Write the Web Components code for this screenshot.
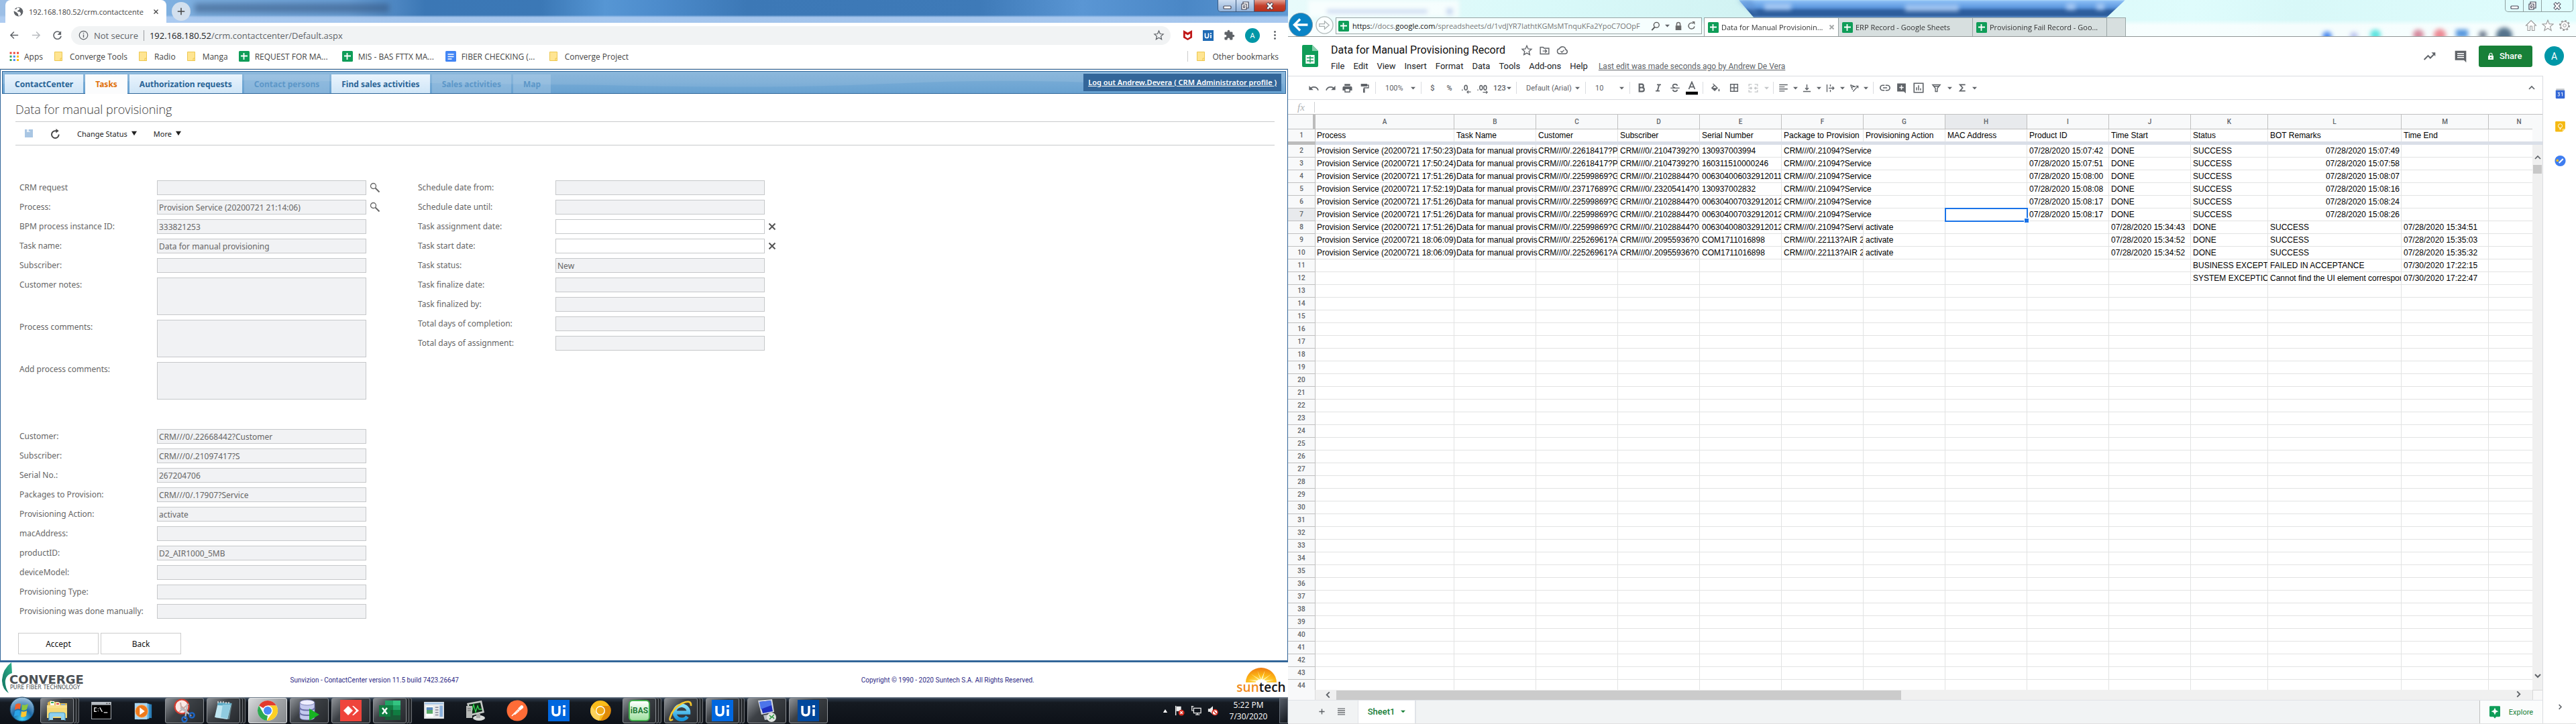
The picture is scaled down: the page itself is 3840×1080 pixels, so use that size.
<!DOCTYPE html>
<html lang="en">
<head>
<meta charset="utf-8">
<title>Data for manual provisioning</title>
<style>
html,body{margin:0;height:100%}
body{display:flex;height:100vh;overflow:hidden;background:#fff;font-family:"Open Sans","Noto Sans",sans-serif;font-size:12px;color:#333}
crm-desktop,sheets-desktop{flex:1 1 0;min-width:0}
</style>
</head>
<body>
<crm-desktop></crm-desktop>
<sheets-desktop></sheets-desktop>
<script>
const G='#5f6368';
const ui=(bg)=>`<rect width="32" height="32" fill="${bg}"/><g fill="none" stroke="#fff" stroke-width="3.4"><path d="M7 9v9q0 5 5 5t5-5V9M24 14v10"/></g><rect x="22" y="8" width="4" height="3.4" fill="#fff"/>`;
const st=(d,w=2,c=G)=>`<path d="${d}" fill="none" stroke="${c}" stroke-width="${w}"/>`;
const fl=(d,c=G)=>`<path d="${d}" fill="${c}"/>`;
/* name: [viewBox, markup] */
const ICONS={
 globe:['0 0 24 24',`<circle cx="12" cy="12" r="11" fill="#5f6368"/>`+fl('M9 2l6 1-1 4-4 2 0 3 5 0 3 4-2 5-4 1-1-5-4-4-6-3 1-4 5 0z','#fff')],
 back:['0 0 24 24',st('M21 12H4M11 4l-8 8 8 8',2.4)],
 fwd:['0 0 24 24',st('M3 12h17M13 4l8 8-8 8',2.4,'#b8bbbf')],
 reload:['0 0 24 24',st('M19.500 7A9 9 0 1 0 21 14',2.6)+fl('M21 2v9h-9z')],
 info:['0 0 24 24',`<circle cx="12" cy="12" r="10" fill="none" stroke="#5f6368" stroke-width="2"/>`+st('M12 10.500v7M12 6v2.500',2.2)],
 close:['0 0 24 24',st('M4 4l16 16M20 4L4 20',3.4,'#444')],
 closegrey:['0 0 24 24',st('M4 4l16 16M20 4L4 20',5,'#a5a8a8')],
 formx:['0 0 24 24',st('M3 3l18 18M21 3L3 21',4.2,'#555')],
 plus:['0 0 24 24',st('M12 3v18M3 12h18',2.6,'#444')],
 apps:['0 0 24 24',['#ea4335','#ea4335','#ea4335','#34a853','#4285f4','#fbbc04','#34a853','#4285f4','#fbbc04'].map((c,i)=>`<rect x="${1+(i%3)*9}" y="${1+(i/3|0)*9}" width="5" height="5" fill="${c}"/>`).join('')],
 folder:['0 0 16 16',`<path d="M1.500 1.500h11v13h-11z" fill="#ffe592" stroke="#edc74f"/><path d="M12.500 11v3.500h-2.500V11z" fill="#ffe592" stroke="#edc74f"/>`],
 sheet:['0 0 16 16',`<rect width="16" height="16" rx="1.500" fill="#0f9d58"/>`+st('M3 7.500h10M7.500 3v10',1.8,'#fff')],
 doc:['0 0 16 16',`<rect width="16" height="16" rx="1.500" fill="#4285f4"/>`+st('M3.500 5h9M3.500 8.500h9M3.500 12h6',1.6,'#fff')],
 star:['0 0 24 24',`<path d="M12 3l2.700 6.200 6.600.6-5 4.500 1.500 6.600L12 17.400 6.200 20.900l1.500-6.600-5-4.500 6.600-.6z" fill="none" stroke="#5f6368" stroke-width="1.800"/>`],
 mcafee:['0 0 16 16',fl('M1 0l7 4 7-4v12l-7 4-7-4z','#c01818')+fl('M4 5.500l4 2.500 4-2.500v5l-4 2.500-4-2.500z','#fff')],
 uismall:['0 0 32 32',ui('#1f6bb5')],
 puzzle:['0 0 24 24',fl('M20.500 11H19V7c0-1.100-.9-2-2-2h-4V3.500a2.500 2.500 0 0 0-5 0V5H4c-1.100 0-2 .9-2 2v3.800h1.500a2.700 2.700 0 0 1 0 5.400H2V20c0 1.100.9 2 2 2h3.800v-1.500a2.700 2.700 0 0 1 5.400 0V22H17c1.100 0 2-.9 2-2v-4h1.500a2.500 2.500 0 0 0 0-5z')],
 dots:['0 0 24 24',`<g fill="#5f6368"><circle cx="12" cy="4" r="2.300"/><circle cx="12" cy="12" r="2.300"/><circle cx="12" cy="20" r="2.300"/></g>`],
 save:['0 0 14 14',fl('M1 1h12v12H1z','#a9c6e3')+fl('M4 1h5v4H4z','#e8f0f8')+fl('M7 1h2v3H7z','#a9c6e3')],
 refresh:['0 0 16 16',st('M13.500 9A5.700 5.700 0 1 1 8 3.500h2',2,'#444')+fl('M9 0l4.500 3.500L9 7z','#444')],
 lens:['0 0 16 16',`<circle cx="5.500" cy="5.500" r="4" fill="none" stroke="#666" stroke-width="1.300"/>`+st('M8.500 8.500l6 6',2,'#666')],
 tri:['0 0 10 10',fl('M0 2.500h10L5 8z')],
 tridark:['0 0 10 10',fl('M0 1h10L5 9z','#222')],
 trigreen:['0 0 10 10',fl('M0 2.500h10L5 7.500z','#188038')],
 trilight:['0 0 10 10',fl('M0 2.500h10L5 8z','#c4c6c8')],
 min:['0 0 24 18',`<rect x="7" y="9" width="11" height="4" rx="1" fill="#fff" stroke="#445" stroke-width="1.200"/>`],
 restore:['0 0 24 18',`<path d="M9 3h8v9h-8z" fill="#fff" stroke="#445" stroke-width="1.200"/><path d="M7 6h7v8H7z" fill="#fff" stroke="#445" stroke-width="1.200"/><path d="M9.500 8.500h2v3h-2z" fill="none" stroke="#445"/>`],
 winx:['0 0 24 18',st('M8 4.500l8 9M16 4.500l-8 9',4.6,'#445')+st('M8.500 5l7 8M15.500 5l-7 8',2.6,'#fff')],
 converge:['0 0 18 46',`<defs><linearGradient id="a" x1="1" y1="0" x2="0" y2="1"><stop offset="0" stop-color="#2fb28d"/><stop offset="1" stop-color="#11725f"/></linearGradient></defs>`+fl('M15 0Q2 10 1 26q0 14 10 20Q5 36 6 27q1-8 10-11z','url(#a)')],
 sun:['0 0 52 24',`<defs><radialGradient id="s" cx=".5" cy="1" r="1"><stop offset="0" stop-color="#fff27a"/><stop offset=".5" stop-color="#fdb515"/><stop offset="1" stop-color="#ee7a12"/></radialGradient></defs><path d="M1 24a25 24 0 0 1 50 0z" fill="url(#s)"/>`+fl('M26 24L5 20l19 1L9 10l16 10L20 5l6 14 6-14-4 15L43 10 29 21l18-1z','#fffbd0')+`<ellipse cx="26" cy="24" rx="9" ry="5" fill="#fff"/>`],
 start:['0 0 40 40',`<defs><radialGradient id="o" cx=".5" cy=".9" r=".9"><stop offset="0" stop-color="#3fd0f5"/><stop offset=".45" stop-color="#1c6aa8"/><stop offset="1" stop-color="#a9c6dc"/></radialGradient></defs><circle cx="20" cy="20" r="18" fill="url(#o)" stroke="#0b3a5e"/><path d="M10 13q4-3 8-1l-1 8q-4-2-8 1z" fill="#f2602a"/><path d="M20 13q4 2 9-1l-2 8q-4 3-8 1z" fill="#8cc63f"/><path d="M9 23q4-3 8-1l-1 8q-4-2-8 1z" fill="#2aa5e8"/><path d="M19 23q4 2 8-1l-1 8q-4 3-8 1z" fill="#fdc72e"/>`],
 explorer:['0 0 36 36',fl('M4 6l5-3 3 2h8l3 2h10v20H4z','#e0b94f')+fl('M8 4h6v6H8z','#fff')+fl('M16 6h6v6h-6z','#fff')+fl('M9 5h4v2H9z','#34a853')+fl('M17 7h4v2h-4z','#e04030')+fl('M24 8h6v4h-6z','#8ac')+fl('M3 10h30v19H3z','#f8e08c')+fl('M3 14h30v15H3z','#f5d976')+fl('M6 32v-8q0-3 3-3h18q3 0 3 3v8h-6v-5H12v5z','#8ed0f0')+st('M6 33v-9q0-3 3-3h18q3 0 3 3v9',1.2,'#4a9cc8')],
 cmd:['0 0 32 28',fl('M0 0h32v28H0z','#b8bec4')+fl('M1 5h30v22H1z','#000')+`<circle cx="29" cy="2.500" r="1" fill="#444"/><circle cx="25" cy="2.500" r="1" fill="#444"/>`+st('M8.500 9.500H5v6h3.500M11 10.500v1M11 14v1M13.500 9l4 7M20 17h6',1.4,'#eee')],
 media:['0 0 32 32',fl('M14 4l16 2v22l-16-2z','#2c7fb8')+fl('M8 4l18 1v24L8 30z','#59aee0')+fl('M3 4h20v26H3z','#a8d6f2')+`<circle cx="14" cy="17" r="10" fill="#ee7a1c"/><circle cx="14" cy="17" r="10" fill="none" stroke="#f8b878"/>`+fl('M11 11l8 6-8 6z','#fff')],
 snip:['0 0 36 36',`<circle cx="14" cy="12" r="10.500" fill="#fbe9e6" stroke="#d43b2f" stroke-width="2.200"/>`+st('M14 12l14 14M10 20L24 8M12 6l2 12',2,'#c9a9a4')+st('M12 14l13 9M22 8l-3 22',2.2,'#b7bcc4')+`<circle cx="29" cy="25" r="3.600" fill="none" stroke="#1c66c9" stroke-width="2.400"/><circle cx="18" cy="31" r="3.600" fill="none" stroke="#1c66c9" stroke-width="2.400"/>`],
 notepad:['0 0 34 34',fl('M10 4l20 2-4 24-20-2z','#5f7f88')+fl('M9 5l20 1-6 24L4 27z','#bfe6f2')+fl('M9 5l20 1-1 4L8 9z','#5aa8c4')+fl('M16 8h12l-5 21-10-2z','#8fcbe0')+st('M9 3v3M13 3v3M17 3v3M21 4v3M25 4v3',1.4,'#ddd')],
 chrome:['0 0 34 34',`<circle cx="17" cy="17" r="15" fill="#fff"/>`+fl('M17 17L4 9.500A15 15 0 0 1 30 9.500H17z','#e33b2e')+fl('M4 9.500L10.500 20.700 17 24.500 15.700 32A15 15 0 0 1 4 9.500z','#2da94f')+fl('M30 9.500A15 15 0 0 1 15.700 32L23.500 20.700 23.500 13 17 9.500z','#fdd023')+`<circle cx="17" cy="17" r="7.500" fill="#fff"/><circle cx="17" cy="17" r="6" fill="#4a8af4"/>`],
 db:['0 0 34 34',`<g fill="#c4c9ee" stroke="#6a6ea8" stroke-width=".8"><path d="M3 5v22q0 4 11 4t11-4V5z"/><path d="M3 20q0 4 11 4t11-4M3 12.500q0 4 11 4t11-4" fill="none" stroke-width="2"/><ellipse cx="14" cy="5" rx="11" ry="4" fill="#eef"/></g>`+fl('M17 14l15 9-15 9z','#18b522')],
 anydesk:['0 0 32 32',fl('M0 0h32v32H0z','#ef443b')+fl('M12 9l7 7-7 7-7-7z','#fff')+fl('M18 9l2 0 8 7-8 7-2 0 6-7z','#fff')],
 excel:['0 0 34 34',fl('M10 2h23v29H10z','#21a366')+fl('M10 9h12v8H10z','#107c41')+fl('M22 2h11v7H22z','#33c481')+fl('M10 16h23v15H10z','#185c37')+fl('M22 16h11v8H22z','#107c41')+fl('M1 9h17v17H1z','#107c41')+st('M6 13l7 9M13 13l-7 9',2.4,'#fff')],
 win:['0 0 32 28',fl('M0 0h32v27H0z','#e8eaec')+fl('M1 1h30v3H1z','#a9c8e8')+fl('M3 7h12v17H3z','#fff')+fl('M4 9h10v10H4z','#58a868')+fl('M4 9h10v4H4z','#5a86c4')+st('M18 9h5M18 13h5M18 17h5M18 21h5',1.6,'#889')+fl('M25 6h5v18h-5z','#8ab0dc')],
 monitor:['0 0 34 34',fl('M4 6l22-4 4 18-21 5z','#c8cac8')+fl('M7 8l17-3 3 13-17 4z','#0f2c18')+st('M8 16h4l2-8 3 11 3-9 2 5h4',1.3,'#33d650')+fl('M3 10h9v18H3z','#b7b9b7')+st('M5 14h5M5 17h5',1,'#666')+`<ellipse cx="22" cy="28" rx="9" ry="4" fill="#d7d9d7"/>`+fl('M18 22h6v6h-6z','#aaa')],
 postman:['0 0 32 32',`<circle cx="16" cy="16" r="15.500" fill="#ff6c37"/>`+st('M8 24l9-9 2 1M12 22l7-6',1.6,'#fff')+fl('M17 13l5-5q4 0 3 4l-5 4z','#fff')],
 ui1:['0 0 32 32',ui('#0067df')],
 ui2:['0 0 32 32',ui('#00479c')],
 canary:['0 0 34 34',`<circle cx="17" cy="17" r="15" fill="#fbbc1a"/>`+fl('M17 10h14a15 15 0 0 1-14 22l7-12z','#e08a08')+fl('M4 10l7 10 6 4-2 8A15 15 0 0 1 4 10z','#fdd25a')+`<circle cx="17" cy="17" r="7" fill="#fff"/><circle cx="17" cy="17" r="5.600" fill="#f0a818"/>`],
 ie:['0 0 36 36',`<defs><linearGradient id="e" x1="0" y1="0" x2="0" y2="1"><stop offset="0" stop-color="#8be2fb"/><stop offset="1" stop-color="#1693d8"/></linearGradient></defs><path d="M27.500 27A10.500 10.500 0 1 1 29.500 21H11" fill="none" stroke="url(#e)" stroke-width="5.500"/><path d="M6 31q-6 4-4-3Q6 14 20 7q14-6 13 4" fill="none" stroke="#f6c62b" stroke-width="2.600"/>`],
 rdp:['0 0 36 36',fl('M5 3l21-2 3 19-19 4z','#d5dbe4')+fl('M7 5l17-2 3 16-15 3z','#1e2fc0')+fl('M7 5l17-2 1 7-16 6z','#4c74ea')+fl('M13 25l12-2 4 7-14 2z','#b9bec6')+`<circle cx="25" cy="28" r="7" fill="#dfe3e0"/>`+st('M22 25l3 3-3 3M29 24l-3 3 3 3',1.5,'#2a9a3e')],
 trayup:['0 0 10 8',fl('M0 8h10L5 0z','#fff')],
 flag:['0 0 18 18',st('M3 1v16',1.6,'#eee')+fl('M4 2h8v8H4z','#eee')+`<circle cx="12.500" cy="12.500" r="5" fill="#d42a1e"/>`+st('M10.500 10.500l4 4M14.500 10.500l-4 4',1.5,'#fff')],
 net:['0 0 18 18',st('M5 5h12v8H5zM8 16h7M11 13v3M2 1v8h3M1 2h4',1.4,'#eee')],
 sound:['0 0 18 18',fl('M1 6h3l5-4.500v14L4 11H1z','#eee')+`<circle cx="12.500" cy="12" r="4.500" fill="#fff" stroke="#d42a1e" stroke-width="1.800"/>`+st('M9.500 9l6 6',1.6,'#d42a1e')],
 ieback:['0 0 40 40',`<circle cx="20" cy="20" r="18.500" fill="#0a84c6" stroke="#7d97a5"/>`+st('M31 20H11M19 11l-9 9 9 9',3.6,'#fff')],
 iefwd:['0 0 30 30',`<circle cx="15" cy="15" r="13" fill="#fbffff" stroke="#b3bcbc" stroke-width="1.400"/>`+st('M7 13h8V9l7 6-7 6v-4H7z',1.3,'#a9b0b0')],
 search:['0 0 16 16',`<circle cx="9.500" cy="6" r="4.500" fill="none" stroke="#555" stroke-width="1.500"/>`+st('M6.500 9.500L1.500 15',2.2,'#555')],
 lock:['0 0 14 16',fl('M2 7h10v8H2z','#6a6a6a')+st('M4 7V4.500a3 3 0 0 1 6 0V7',1.8,'#6a6a6a')],
 iereload:['0 0 16 16',st('M13.500 9A5.500 5.500 0 1 1 11 3.500',1.8,'#666')+fl('M9 0h5v6z','#666')],
 home:['0 0 18 18',`<path d="M1.500 9L9 1.500 16.500 9H14v7.500h-3.500V10h-3v6.500H4V9z" fill="#fff" stroke="#9a9a9a" stroke-width="1.100"/>`],
 iestar:['0 0 18 18',`<path d="M9 1l2.200 5.600 6 .3-4.700 3.700 1.700 6L9 13.200l-5.200 3.400 1.700-6L.8 6.900l6-.3z" fill="#fff" stroke="#9a9a9a" stroke-width="1.100"/>`],
 gear:['0 0 18 18',`<circle cx="9" cy="9" r="6.600" fill="#fff" stroke="#9a9a9a" stroke-width="3" stroke-dasharray="2.600 2.580"/><circle cx="9" cy="9" r="5.800" fill="#fff" stroke="#9a9a9a"/><circle cx="9" cy="9" r="2.300" fill="#fff" stroke="#9a9a9a"/>`],
 sheetslogo:['0 0 24 33',fl('M2 0h13l9 9v22q0 2-2 2H2q-2 0-2-2V2q0-2 2-2z','#0f9d58')+fl('M15 0l9 9h-9z','#87ceac')+fl('M5.500 15h13v13h-13z','#fff')+st('M7 19.200h10M7 23.700h10M12 16v11',1.4,'#0f9d58')+st('M6.300 15.800h11.400v11.400H6.300z',1.2,'#fff')],
 move:['0 0 24 24',st('M3 5h6l2 2h10v12H3z',2)+st('M8 13h8M13 9.500l3.500 3.500-3.500 3.500',1.8)],
 cloud:['0 0 24 24',st('M7 19a5 5 0 0 1-1-9.900 6.500 6.500 0 0 1 12.500 1.500A4.300 4.300 0 0 1 18 19z',2)+st('M8.500 13.500l2.500 2.500 4.500-4.500',1.8)],
 trend:['0 0 24 24',st('M2 18l7-7 4 4 8-8',2.4)+fl('M15 5h7v7z')],
 comment:['0 0 24 24',fl('M2 2h20v21l-4-4H2z')+st('M6 7h12M6 10.500h12M6 14h12',1.8,'#fff')],
 sharelock:['0 0 24 24',fl('M4 10h16v12H4z','#fff')+st('M8 10V6.500a4 4 0 0 1 8 0V10',2.4,'#fff')+`<circle cx="12" cy="16" r="2" fill="#188038"/>`],
 undo:['0 0 24 24',fl('M2 7v9h9l-3.600-3.600a8 8 0 0 1 12.600 4.600l2.300-.8A10.500 10.500 0 0 0 5.600 10.600z')],
 redo:['0 0 24 24',fl('M22 7v9h-9l3.600-3.600A8 8 0 0 0 4 17l-2.300-.8a10.500 10.500 0 0 1 16.700-5.600z')],
 print:['0 0 24 24',fl('M6 3h12v4H6zM5 8h14q3 0 3 3v6h-4v4H6v-4H2v-6q0-3 3-3z')+fl('M8 14h8v5H8z','#fff')],
 paint:['0 0 24 24',fl('M4 3h14v6H4z')+st('M18 6h3v6H11v3',2)+fl('M9 14h4v9H9z')],
 dec0:['0 0 24 24',st('M3 16h2',2.4)+`<ellipse cx="11.500" cy="11" rx="3" ry="5" fill="none" stroke="#5f6368" stroke-width="2.200"/>`+st('M22 20h-8M17 17l-3 3 3 3',1.6)],
 dec00:['0 0 28 24',st('M2 16h2',2.4)+`<g fill="none" stroke="#5f6368" stroke-width="2.200"><ellipse cx="10" cy="11" rx="3" ry="5"/><ellipse cx="19" cy="11" rx="3" ry="5"/></g>`+st('M14 21h10M21 18l3 3-3 3',1.6)],
 bold:['0 0 24 24',`<path d="M7 4v16h6.500a4.300 4.300 0 0 0 0-8.600 3.800 3.800 0 0 0-.5-7.400zM7 11.500h6" fill="none" stroke="#5f6368" stroke-width="3.200"/>`],
 italic:['0 0 24 24',st('M9 5h9M6 19h9M14 5l-4 14',2.8)],
 strike:['0 0 24 24',st('M2 12.500h20',2)+st('M17 7.500Q16.500 4 12 4T7 7.500t5 4M7 16q.5 4 5 4t5-4',2.4)],
 textcol:['0 0 24 28',st('M6 16L12 2l6 14M8.500 11.500h7',2.4)+fl('M0 21h24v6H0z','#000')],
 fill:['0 0 24 24',fl('M7 2l10 9.500-7 7-7.500-7 6-6-3-2.500zM19 13q3 4 0 6-3-2 0-6z')+fl('M6 11.500l4-4 4 4z','#fff')],
 borders:['0 0 24 24',st('M4 4h16v16H4zM4 12h16M12 4v16',2.2)],
 merge:['0 0 24 24',st('M9 4H3v4M3 16v4h6M15 4h6v4M21 16v4h-6M2 12h7M22 12h-7M6.500 9.500L9 12l-2.500 2.500M17.500 9.500L15 12l2.500 2.500',1.9,'#c4c6c8')],
 align:['0 0 24 24',st('M2 4h20M2 9h13M2 14h20M2 19h13',2.3)],
 valign:['0 0 24 24',st('M3 20h18M12 3v12M8 11.500l4 4 4-4',2.3)],
 wrap:['0 0 24 24',st('M4 3v18M12 3v5M12 16v5M8 12h12M17 8.500l3.500 3.500-3.500 3.500',2.2)],
 rotate:['0 0 24 24',st('M4 4l5 12M4 4l12 5M7 11l4-4M10 20L22 7M22 12V7h-5',2)],
 link:['0 0 24 24',st('M11 17H7.500a5 5 0 0 1 0-10H11M13 7h3.500a5 5 0 0 1 0 10H13M8 12h8',2.2)],
 addcomment:['0 0 24 24',fl('M3 2h18v21l-4-4H3z')+st('M12 6v9M7.500 10.500h9',2.2,'#fff')],
 chart:['0 0 24 24',st('M3 3h18v18H3z',2.2)+st('M8 11v6M12 7v10M16 13v4',2)],
 filter:['0 0 24 24',st('M4 5h16l-6 7.500v6.500h-4v-6.500zM7 8h10',2)],
 sigma:['0 0 24 24',st('M19 5H7l6 7-6 7h12',2.6)],
 up:['0 0 24 24',st('M4 16l8-8 8 8',3.4)],
 down:['0 0 24 24',st('M4 8l8 8 8-8',4)],
 left:['0 0 24 24',st('M17 3l-9 9 9 9',4)],
 right:['0 0 24 24',st('M7 3l9 9-9 9',4)],
 cal:['0 0 24 26',fl('M2 2h20v6H2z','#c5c9cc')+fl('M1 6h22v18q0 2-2 2H3q-2 0-2-2z','#3367d6')+st('M6 12h4.500l-2.500 3q3 0 2.500 3t-4.500 1M14 13l3-1.500V20',1.5,'#fff')],
 keep:['0 0 24 26',fl('M2 0h20q2 0 2 2v16l-7 7H2q-2 0-2-2V2q0-2 2-2z','#f5b912')+fl('M24 18l-7 7v-7z','#fbdc7b')+`<circle cx="12" cy="11" r="5" fill="none" stroke="#fff" stroke-width="1.500"/>`+st('M10 17h4M10 19.500h4',1.5,'#fff')],
 tasks:['0 0 28 30',`<circle cx="14" cy="15" r="13.500" fill="#3f7df0"/><circle cx="7" cy="14" r="3" fill="#fbbc04"/>`+st('M11 20l10-10',3.6,'#fff')],
 addsheet:['0 0 20 20',st('M10 1v18M1 10h18',3,'#5b5f63')],
 list:['0 0 20 20',st('M0 2h20M0 7.300h20M0 12.600h20M0 18h20',2.6,'#6a6d70')],
 explore:['0 0 24 28',fl('M2 0h20q2 0 2 2v20q0 2-2 2h-7l-3 4-3-4H2q-2 0-2-2V2q0-2 2-2z','#0f9d58')+fl('M12 4l2.500 5.500L20 12l-5.500 2.500L12 20l-2.500-5.500L4 12l5.500-2.500z','#fff')]
};
class UiIcon extends HTMLElement{
 connectedCallback(){
  const [vb,m]=ICONS[this.getAttribute('name')];
  const w=this.getAttribute('w')||16,h=this.getAttribute('h')||w;
  this.attachShadow({mode:'open'}).innerHTML=`<style>:host{display:inline-flex;flex:none}svg{display:block}</style><svg width="${w}" height="${h}" viewBox="${vb}" aria-hidden="true">${m}</svg>`;
 }
}
customElements.define('ui-icon',UiIcon);

const def=(name,css,html)=>customElements.define(name,class extends HTMLElement{
 connectedCallback(){
  if(this.shadowRoot)return;
  this.attachShadow({mode:'open'}).innerHTML=`<style>*{box-sizing:border-box}button,input,textarea,select{font:inherit;color:inherit;margin:0}button{background:none;border:0;padding:0}${css}</style>${typeof html==='function'?html(this):html}`;
 }
});
const ic=(n,w=16,h=w)=>`<ui-icon name="${n}" w="${w}" h="${h}"></ui-icon>`;

/* ---------- left monitor ---------- */
def('crm-desktop',':host{display:flex;flex-direction:column;min-height:0;background:#fff}crm-page{flex:1;min-height:0}',
 '<chrome-tabs></chrome-tabs><chrome-toolbar></chrome-toolbar><bookmarks-bar></bookmarks-bar><crm-page></crm-page><crm-footer></crm-footer><win-taskbar></win-taskbar>');

def('window-buttons',`:host{display:flex;align-self:flex-start;height:18px;border:1px solid var(--line,#3b5a80);border-top:0;border-radius:0 0 5px 5px;overflow:hidden}
button{width:27px;height:17px;border-right:1px solid var(--line,#3b5a80);display:grid;place-items:center;background:var(--btn,linear-gradient(#cfdff2,#8fb0d8))}
button:last-child{width:46px;border:0;background:var(--close,linear-gradient(#e3a294,#c4402c 50%,#b5301c))}`,
 `<button aria-label="Minimize">${ic('min',24,18)}</button><button aria-label="Restore">${ic('restore',24,18)}</button><button aria-label="Close">${ic('winx',24,18)}</button>`);

def('chrome-tabs',`:host{display:flex;height:34px;position:relative;overflow:hidden;background:
 linear-gradient(transparent 66%,rgba(175,205,242,.9) 76%),
 linear-gradient(90deg,#9dbfe6 0,#7fb0e0 13%,#6a9fd6 27%,#3b77b5 33%,#3b78b6 42%,#5696d4 47%,#4d8ccc 51%,#3c78b6 58%,#3e7ab8 76%,#5a96d4 84%,#4a87c6 92%,#5f9ad4)}
.tab{display:flex;align-items:center;gap:8px;width:240px;margin-left:8px;height:34px;background:#fff;border-radius:8px 8px 0 0;padding:0 11px 0 12px;font-size:11px}
.tab span{flex:1;overflow:hidden;white-space:nowrap;color:#444}
.new{width:28px;height:28px;border-radius:50%;background:#d3e0ee;margin:3px 0 0 8px;display:grid;place-items:center}
.blur{flex:1;margin:5px 0 0 6px;filter:blur(4px)}
.blur i{display:block;width:290px;height:14px;background:rgba(45,75,115,.5)}
window-buttons{margin-right:3px}`,
 `<div class="tab">${ic('globe',15)}<span>192.168.180.52/crm.contactcente</span>${ic('close',9)}</div><button class="new" aria-label="New tab">${ic('plus',14)}</button><div class="blur"><i></i></div><window-buttons></window-buttons>`);

def('chrome-toolbar',`:host{display:flex;align-items:center;height:37px;padding:0 12px 0 14px;gap:18px}
.omni{flex:1;display:flex;align-items:center;height:28px;border-radius:14px;background:#f1f3f4;padding:0 9px 0 11px;gap:8px;font-size:13px;color:#5f6368;margin:0 0 0 -5px}
.sep{width:1px;height:16px;background:#9a9da1}
.nav{display:flex;gap:17px}
.url{flex:1;display:block}.url b{font-weight:400;color:#202124}
.ext{display:flex;gap:15px;align-items:center}
.av{width:22px;height:22px;border-radius:50%;background:#0097a7;color:#fff;display:grid;place-items:center;font-size:11px}`,
 `<div class="nav">${ic('back',15)}${ic('fwd',15)}${ic('reload',15)}</div><div class="omni">${ic('info',15)}<span>Not secure</span><span class="sep"></span><span class="url"><b>192.168.180.52</b>/crm.contactcenter/Default.aspx</span>${ic('star',17)}</div><div class="ext">${ic('mcafee',15)}${ic('uismall',16)}${ic('puzzle',17)}<span class="av">A</span>${ic('dots',15)}</div>`);

def('bookmarks-bar',`:host{display:flex;align-items:center;height:32px;padding:0 14px;gap:16px;border-bottom:1px solid #d4d6d9;color:#444}
a{display:flex;align-items:center;gap:8px;color:inherit;text-decoration:none;white-space:nowrap;padding-bottom:5px}
.long{width:138px}.other{margin-left:auto;border-left:1px solid #ccc;padding-left:12px;height:16px;padding-bottom:0;margin-bottom:5px}`,
 `<a href="#">${ic('apps',14)}Apps</a><a href="#">${ic('folder')}Converge Tools</a><a href="#">${ic('folder')}Radio</a><a href="#">${ic('folder')}Manga</a><a href="#" class="long">${ic('sheet')}REQUEST FOR MA...</a><a href="#" class="long">${ic('sheet')}MIS - BAS FTTX MA...</a><a href="#" class="long">${ic('doc')}FIBER CHECKING (...</a><a href="#">${ic('folder')}Converge Project</a><a href="#" class="other">${ic('folder')}Other bookmarks</a>`);

def('crm-nav',`:host{display:flex;flex:none;height:34px;border:1px solid #2f6699;position:relative;padding:4px 6px 0 3px;gap:3px;background:linear-gradient(#8cb8dc,#82b1d8 50%,#6fa6d3);box-sizing:border-box}
.wave{position:absolute;inset:0;width:100%;height:100%}
a{position:relative;height:28px;line-height:30px;padding:0 15px;font-weight:700;text-decoration:none;color:#2a6496;background:linear-gradient(#eaf4fd,#cfe5f7);white-space:nowrap}
a.on{background:#fbfcfd;color:#e0700a;height:29px}
a.off{background:rgba(190,215,238,.35);color:#5d97c8}
.out{margin:-1px 0 0 auto;height:26px;line-height:26px;background:#336699;color:#fff;text-decoration:underline;padding:0 7px;font-weight:600;font-size:11px}`,
 `<svg class="wave" viewBox="0 0 1914 32" preserveAspectRatio="none" aria-hidden="true"><path d="M0 18Q300 10 480 14T900 20q250 6 420-2t330-1 260 1v14H0z" fill="#5c9acd" opacity=".35"/></svg><a href="#">ContactCenter</a><a href="#" class="on">Tasks</a><a href="#">Authorization requests</a><a href="#" class="off">Contact persons</a><a href="#">Find sales activities</a><a href="#" class="off">Sales activities</a><a href="#" class="off">Map</a><a href="#" class="out">Log out Andrew.Devera ( CRM Administrator profile )</a>`);

def('crm-field',`:host{display:flex;align-items:flex-start;gap:5px;font:12px "Noto Sans",sans-serif;color:#666}
label{width:200px;line-height:22px;height:22px;white-space:nowrap}
input,textarea{width:312px;height:22px;border:1px solid #c6c8ca;background:#f1f2f4;padding:0 2px;resize:none;display:block;border-radius:0;outline:0}
textarea{height:56px}.open{background:#fff}
ui-icon{align-self:center}`,
 e=>{const o=e.dataset;return `<label for="f">${o.label}</label>${'area'in o?'<textarea id="f" readonly></textarea>':`<input id="f" ${'open'in o?'class="open"':'readonly'} value="${o.value||''}">`}${o.icon?ic(o.icon,o.icon==='formx'?12:16):''}`});

const f=(l,v='',x='')=>`<crm-field data-label="${l}" data-value="${v}" ${x}></crm-field>`;
def('crm-page',`:host{display:flex;flex-direction:column;border:1px solid #336699;border-bottom-width:3px;padding:2px 2px 0;font-family:"Noto Sans",sans-serif}
h1{flex:none;margin:0 17px 0 20px;height:42px;font:300 18px/46px "Open Sans",sans-serif;color:#3c3c3c;border-bottom:1px solid #c8cacc}
.bar{flex:none;margin:0 17px 0 20px;height:35px;border-bottom:1px solid #c8cacc;display:flex;align-items:center;gap:25px;padding-left:13px;font-size:11px;color:#222}
.bar button{display:flex;align-items:center;gap:6px}
.form{flex:none;display:grid;grid-template-columns:594px 594px;padding:52px 0 0 26px}
.col{display:flex;flex-direction:column;gap:7px}
.second{padding-top:44px}
.act{flex:none;display:flex;gap:3px;padding:21px 0 0 24px}
.act button{width:120px;height:32px;border:1px solid #ccc;background:#fff;color:#111;font:12px "Noto Sans",sans-serif}`,
 `<crm-nav></crm-nav><h1>Data for manual provisioning</h1><div class="bar"><button aria-label="Save">${ic('save',14)}</button><button aria-label="Refresh">${ic('refresh',15)}</button><button>Change Status ${ic('tridark',8)}</button><button>More ${ic('tridark',8)}</button></div>
<div class="form"><div class="col">${f('CRM request','','data-icon="lens"')+f('Process:','Provision Service (20200721 21:14:06)','data-icon="lens"')+f('BPM process instance ID:','333821253')+f('Task name:','Data for manual provisioning')+f('Subscriber:')+f('Customer notes:','','data-area')+f('Process comments:','','data-area')+f('Add process comments:','','data-area')}</div>
<div class="col">${f('Schedule date from:')+f('Schedule date until:')+f('Task assignment date:','','data-open data-icon="formx"')+f('Task start date:','','data-open data-icon="formx"')+f('Task status:','New')+f('Task finalize date:')+f('Task finalized by:')+f('Total days of completion:')+f('Total days of assignment:')}</div>
<div class="col second">${f('Customer:','CRM///0/.22668442?Customer')+f('Subscriber:','CRM///0/.21097417?S')+f('Serial No.:','267204706')+f('Packages to Provision:','CRM///0/.17907?Service')+f('Provisioning Action:','activate')+f('macAddress:')+f('productID:','D2_AIR1000_5MB')+f('deviceModel:')+f('Provisioning Type:')+f('Provisioning was done manually:')}</div></div>
<div class="act"><button>Accept</button><button>Back</button></div>`);

def('crm-footer',`:host{display:grid;grid-template-columns:131px 1fr 1fr 80px;height:52px;align-items:center;text-align:center;font:10px Roboto,sans-serif;color:#2e2a86}
.cv{display:flex;padding-left:2px;color:#4a4f53;text-align:left;height:46px;align-self:start}
.cv div{margin:18px 0 0 -6px;white-space:nowrap}.cv b{display:block;font:700 18px/16px "DejaVu Sans",sans-serif}.cv small{display:block;font:8px/8px "DejaVu Sans",sans-serif;padding-left:1px}
.sun{display:flex;flex-direction:column;align-items:center;font:600 19px/14px "Open Sans",sans-serif;color:#111}.sun i{font-style:normal;color:#f08a1a}`,
 `<div class="cv">${ic('converge',18,46)}<div><b>CONVERGE</b><small>PURE FIBER TECHNOLOGY</small></div></div><span>Sunvizion - ContactCenter version 11.5 build 7423.26647</span><span>Copyright © 1990 - 2020 Suntech S.A. All Rights Reserved.</span><div class="sun">${ic('sun',52,22)}<span><i>sun</i>tech</span></div>`);

def('task-button',`:host{display:block;width:62px;padding:1px 2px;height:40px;box-sizing:border-box}
.b{display:flex;height:38px;width:58px}
button{flex:1;display:grid;place-items:center;border:1px solid transparent;border-radius:3px}
:host([open]) button{border-color:#8b8f94;background:linear-gradient(135deg,#8d9196,#3d4146 40%,#26292d)}
:host([active]) button{border-color:#e4e6e8;background:linear-gradient(135deg,#d8dadc,#a3a6a9 50%,#84888c)}
i{display:none;width:4px;border:1px solid #6f7378;border-left:0;border-radius:0 3px 3px 0;background:#24272b}
:host([stack]) i{display:block}
b{font:700 12px Roboto,sans-serif;color:#1e7a35;background:linear-gradient(#fff,#9fe0a0);border:2px solid #3fae4a;border-radius:6px;width:32px;height:32px;display:grid;place-items:center}`,
 e=>{const n=e.getAttribute('icon');return `<div class="b"><button aria-label="${n}">${n==='ibas'?'<b>iBAS</b>':ic(n,+e.getAttribute('w')||34,+e.getAttribute('h')||+e.getAttribute('w')||34)}</button><i></i><i></i></div>`});

def('win-taskbar',`:host{display:flex;align-items:center;height:40px;background:linear-gradient(#6b7886 0,#6b7886 1px,#2c3a4a 2px,#151a21 8px,#0d1118);color:#fff}
.start{width:58px;padding-left:7px}
.tray{display:flex;align-items:center;gap:9px;margin-left:auto}
.clock{text-align:center;font-size:12px;line-height:17px;width:74px;margin-left:-1px}
.show{width:13px;height:38px;border:1px solid #68707a;background:linear-gradient(135deg,#555c66,#14181e)}`,
 `<button class="start" aria-label="Start">${ic('start',40)}</button>`+
 [['explorer',36,36,'open stack'],['cmd',30,26,''],['media',30,30,''],['snip',36,36,'open'],['notepad',34,34,'open stack'],['chrome',34,34,'open active'],['db',34,34,'open'],['anydesk',32,32,'open'],['excel',34,34,'open stack'],['win',30,26,''],['monitor',34,34,''],['postman',32,32,''],['ui1',32,32,''],['canary',34,34,''],['ibas',34,34,'open stack'],['ie',36,36,'open stack'],['ui1',32,32,'open stack'],['rdp',36,36,'open'],['ui2',32,32,'open']].map(a=>`<task-button icon="${a[0]}" w="${a[1]}" h="${a[2]}" ${a[3]}></task-button>`).join('')+
 `<div class="tray">${ic('trayup',8,5)}${ic('flag',16)}${ic('net',16)}${ic('sound',16)}<div class="clock">5:22 PM<br>7/30/2020</div><div class="show"></div></div>`);

/* ---------- right monitor ---------- */
def('sheets-desktop',`:host{display:flex;flex-direction:column;min-height:0;background:#fff;font-family:Roboto,sans-serif}
.row{flex:1;display:flex;min-height:0;border-bottom:1px solid #e0e0e0}
.main{flex:1;display:flex;flex-direction:column;min-width:0;min-height:0}
sheet-grid{flex:1;min-height:0}`,
 '<ie-chrome></ie-chrome><docs-header></docs-header><div class="row"><div class="main"><sheet-toolbar></sheet-toolbar><formula-bar></formula-bar><sheet-grid></sheet-grid><sheet-tabs></sheet-tabs></div><side-panel></side-panel></div>');

def('ie-chrome',`:host{display:flex;align-items:flex-end;height:55px;box-sizing:border-box;position:relative;overflow:hidden;border-bottom:1px solid #909696;font-family:"Open Sans",sans-serif;
 background:linear-gradient(transparent 55%,rgba(255,255,255,.75) 70%),linear-gradient(100deg,#e8fbfb,#d9f9f9 20%,#d2f3f3 35%,#dffcfc 70%,#d8f8f8 78%,#e0fdfd)}
.glass{position:absolute;left:35%;width:30%;top:0;height:27px;background:linear-gradient(#8fc2f8,#5f9ae0 40%,#2f5f9f 60%,#2c5c9a 85%,#6fa0dc);clip-path:polygon(0 0,100% 0,95% 100%,4% 100%);filter:blur(1px)}
.ghost{position:absolute;inset:0;width:100%;height:54px}
.back{height:36px;width:40px;overflow:hidden;position:relative}
.addr,.tab,.fw{position:relative}
.fw{height:31px;width:31px;padding-bottom:2px}
.addr{display:flex;align-items:center;gap:5px;height:25px;width:546px;margin:0 3px 3px 0;border:1px solid #9aa5a5;background:#f6fefe;padding:0 8px 0 3px;font-size:11px;color:#777}
.addr span{flex:1;overflow:hidden;white-space:nowrap;min-width:0}.addr b{font-weight:400;color:#111}
.addr .r{display:flex;gap:7px;align-items:center}
.tab{display:flex;align-items:center;gap:4px;width:200px;height:28px;border:1px solid #9aa5a5;border-right:0;border-bottom:0;background:#d7dfdf;padding:0 5px;color:#333;font-size:11px;white-space:nowrap}
.tab span{flex:1;overflow:hidden}
.tab.on{background:#fff}
.nt{width:29px;border-right:1px solid #9aa5a5}
.right{margin-left:auto;align-self:stretch;display:flex;flex-direction:column;align-items:flex-end;position:relative;padding:0 4px 0 0}
window-buttons{--line:#8fa0a0;--btn:transparent;--close:transparent;align-self:flex-end}
.tools{display:flex;gap:7px;margin:11px 4px 0 0}`,
 `<div class="glass"></div><svg class="ghost" viewBox="0 0 1920 54" preserveAspectRatio="none" aria-hidden="true"><defs><filter id="b"><feGaussianBlur stdDeviation="3"/></filter></defs><g filter="url(#b)"><path d="M30 0h225v26H30z" fill="#fff" opacity=".7"/><path d="M58 14h150v6H58zM236 12h10v10h-10z" fill="#9db8e6" opacity=".5"/><path d="M710 5h40v10h-40zM920 7h80v10h-80zM1160 5h14v10h-14zM1205 5h12v10h-12z" fill="#bdd9fb" opacity=".7"/><path d="M670 0l22 0 8 24z" fill="#5b8fd0" opacity=".5"/><circle cx="1549" cy="54" r="7" fill="#4a88ee"/><circle cx="1589" cy="54" r="6" fill="#b9c2ee"/><circle cx="1621" cy="52" r="8" fill="#5fe4e0"/><circle cx="1685" cy="52" r="8" fill="#d58a9e"/><circle cx="1717" cy="52" r="9" fill="#ec8a94"/><path d="M1741 44h18v12h-18z" fill="#5596de"/><circle cx="1781" cy="52" r="6" fill="#6e7b8e"/><circle cx="1813" cy="53" r="12" fill="#55738c"/></g></svg>
<div class="back">${ic('ieback',38)}</div><div class="fw">${ic('iefwd',29)}</div>
<div class="addr">${ic('sheet')}<span><b>https:</b>//docs.<b>google.com</b>/spreadsheets/d/1vdJYR7IathtKGMsMTnquKFa2YpoC7OOpF</span><div class="r">${ic('search',14)}${ic('tri',7)}${ic('lock',12,14)}${ic('iereload',13)}</div></div>
<div class="tab on">${ic('sheet')}<span>Data for Manual Provisionin...</span>${ic('closegrey',9)}</div><div class="tab">${ic('sheet')}<span>ERP Record - Google Sheets</span></div><div class="tab">${ic('sheet')}<span>Provisioning Fail Record - Goo...</span></div><div class="tab nt"></div>
<div class="right"><window-buttons></window-buttons><div class="tools">${ic('home',18)}${ic('iestar',18)}${ic('gear',18)}</div></div>`);

def('docs-header',`:host{display:flex;height:58px;padding:0 18px 0 21px;color:#202124}
.logo{padding-top:12px;width:43px}
.mid{display:flex;flex-direction:column;flex:1}
.t{display:flex;align-items:center;gap:9px;height:32px;padding-top:8px}
h1{margin:0 14px 0 0;font:400 16px/24px Roboto,sans-serif;color:#111}
nav{display:flex;gap:13px;font-size:13px;line-height:24px}
nav a{color:#606469;font-size:12px;margin-left:3px}
.r{display:flex;align-items:center;height:57px}
.r>ui-icon{margin-right:26px}.r>ui-icon+ui-icon{margin-right:17px}
.share{display:flex;align-items:center;gap:7px;width:80px;height:32px;border-radius:3px;background:#188038;color:#fff;font-weight:500;font-size:13px;padding-left:12px}
.av{width:29px;height:29px;border-radius:50%;background:#0097a7;color:#fff;display:grid;place-items:center;font-size:14px;margin-left:18px}`,
 `<div class="logo">${ic('sheetslogo',24,33)}</div><div class="mid"><div class="t"><h1>Data for Manual Provisioning Record</h1>${ic('star',18)}${ic('move',17)}${ic('cloud',18)}</div><nav><button>File</button><button>Edit</button><button>View</button><button>Insert</button><button>Format</button><button>Data</button><button>Tools</button><button>Add-ons</button><button>Help</button><a href="#">Last edit was made seconds ago by Andrew De Vera</a></nav></div><div class="r">${ic('trend',20)}${ic('comment',20)}<button class="share">${ic('sharelock',12)}Share</button><span class="av">A</span></div>`);

const tb=(n,w=16,h=w,c='')=>`<button class="${c}" aria-label="${n}">${ic(n,w,h)}</button>`;
const tri=(n='tri')=>`<button class="tri" aria-label="More">${ic(n,7)}</button>`;
def('sheet-toolbar',`:host{display:flex;align-items:center;height:36px;box-sizing:border-box;border-top:1px solid #dadce0;border-bottom:1px solid #dadce0;padding:0 8px 0 26px;font-size:11px;color:#5f6368;font-weight:500}
button{width:25px;height:26px;display:flex;align-items:center;justify-content:center}
.w{width:28px}.tri{width:12px}.two{width:35px;gap:7px}
.num{width:33px;gap:1px}
hr{width:1px;height:18px;border:0;background:#dadce0;margin:0 4px}
.s{display:grid;align-items:center;font-weight:400}.s>*{grid-area:1/1}.s ui-icon{justify-self:end;margin-right:4px;pointer-events:none}
select{appearance:none;border:0;background:none;padding:0 0 0 10px;height:26px;outline:0;width:100%}
.z{width:59px}.fn{width:94px}.sz{width:57px}
.end{margin-left:auto;width:16px}`,
 tb('undo',17)+tb('redo',17)+tb('print',17)+tb('paint',16)+`<hr><div class="s z"><select aria-label="Zoom"><option>100%</option></select>${ic('tri',7)}</div><hr><button>$</button><button>%</button>`+tb('dec0',17)+tb('dec00',19,17)+`<button class="num">123${ic('tri',7)}</button><hr><div class="s fn"><select aria-label="Font"><option>Default (Arial)</option></select>${ic('tri',7)}</div><hr><div class="s sz"><select aria-label="Font size"><option>10</option></select>${ic('tri',7)}</div><hr>`+tb('bold',16)+tb('italic',16)+tb('strike',16)+tb('textcol',18,21)+'<hr>'+tb('fill',17,17,'w')+tb('borders',16,16,'w')+tb('merge',17,17,'w')+tri('trilight')+'<hr>'+['align','valign','wrap','rotate'].map(n=>`<button class="two" aria-label="${n}">${ic(n,15)}${ic('tri',7)}</button>`).join('')+'<hr>'+tb('link',18)+tb('addcomment',17)+tb('chart',18)+tb('filter',17,17,'w')+tri()+tb('sigma',16)+tri()+tb('up',12,12,'end'));

def('formula-bar',`:host{display:flex;align-items:center;height:21px}
i{width:40px;text-align:center;font:italic 15px "Liberation Serif",serif;color:#b0b3b6;border-right:1px solid #cfd1d4;line-height:16px}
input{flex:1;border:0;outline:0;height:19px}`,
 '<i>fx</i><input aria-label="Formula">');

const ps=(t)=>`Provision Service (20200721 ${t})`,T='Data for manual provis';
const D='07/28/2020 ';
const ROWS={
 1:['Process','Task Name','Customer','Subscriber','Serial Number','Package to Provision','Provisioning Action','MAC Address','Product ID','Time Start','Status','BOT Remarks','Time End'],
 2:[ps('17:50:23'),T,'CRM///0/.22618417?PA','CRM///0/.21047392?00','130937003994','CRM///0/.21094?Service','','',D+'15:07:42','DONE','SUCCESS',D+'15:07:49'],
 3:[ps('17:50:24'),T,'CRM///0/.22618417?PA','CRM///0/.21047392?00','160311510000246','CRM///0/.21094?Service','','',D+'15:07:51','DONE','SUCCESS',D+'15:07:58'],
 4:[ps('17:51:26'),T,'CRM///0/.22599869?GA','CRM///0/.21028844?00','0063040060329120110','CRM///0/.21094?Service','','',D+'15:08:00','DONE','SUCCESS',D+'15:08:07'],
 5:[ps('17:52:19'),T,'CRM///0/.23717689?G','CRM///0/.23205414?00','130937002832','CRM///0/.21094?Service','','',D+'15:08:08','DONE','SUCCESS',D+'15:08:16'],
 6:[ps('17:51:26'),T,'CRM///0/.22599869?GA','CRM///0/.21028844?00','0063040070329120120','CRM///0/.21094?Service','','',D+'15:08:17','DONE','SUCCESS',D+'15:08:24'],
 7:[ps('17:51:26'),T,'CRM///0/.22599869?GA','CRM///0/.21028844?00','0063040070329120120','CRM///0/.21094?Service','','',D+'15:08:17','DONE','SUCCESS',D+'15:08:26'],
 8:[ps('17:51:26'),T,'CRM///0/.22599869?GA','CRM///0/.21028844?00','006304008032912012','CRM///0/.21094?Servic','activate','','',D+'15:34:43','DONE','SUCCESS',D+'15:34:51'],
 9:[ps('18:06:09'),T,'CRM///0/.22526961?AN','CRM///0/.20955936?00','COM1711016898','CRM///0/.22113?AIR 25','activate','','',D+'15:34:52','DONE','SUCCESS',D+'15:35:03'],
 10:[ps('18:06:09'),T,'CRM///0/.22526961?AN','CRM///0/.20955936?00','COM1711016898','CRM///0/.22113?AIR 25','activate','','',D+'15:34:52','DONE','SUCCESS',D+'15:35:32'],
 11:[,,,,,,,,,,'BUSINESS EXCEPTI','FAILED IN ACCEPTANCE','07/30/2020 17:22:15'],
 12:[,,,,,,,,,,'SYSTEM EXCEPTIO','Cannot find the UI element correspond','07/30/2020 17:22:47']
};
const LET='ABCDEFGHIJKLMN'.split('');
function gridRows(){
 let h='<thead><tr class="h"><td class="c"></td>'+LET.map(l=>`<th${l==='H'?' class="sel"':''}>${l}</th>`).join('')+'</tr></thead><tbody>';
 for(let r=1;r<=44;r++){
  const d=ROWS[r]||[];
  h+=`<tr${r===1?' class="first"':''}><th${r===7?' class="sel"':''}>${r}</th>`;
  for(let c=0;c<14;c++){
   const k=[];
   if(c<2)k.push('wide');
   if(c===5&&r>1&&r<8)k.push('spill');
   if(c===11&&r>1&&r<8)k.push('num');
   if(c===7&&r===7)k.push('cur');
   h+=`<td${k.length?` class="${k.join(' ')}"`:''}>${d[c]||''}</td>`;
  }
  h+='</tr>';
  if(r===1)h+='<tr class="fz"><th></th><td colspan="14"></td></tr>';
 }
 return h+'</tbody>';
}
def('sheet-grid',`:host{display:flex;overflow:hidden;border-top:1px solid #c0c0c0}
.g{flex:1;overflow:hidden;min-width:0}
table{table-layout:fixed;width:calc(100% + 26px);border-collapse:separate;border-spacing:0;font:12px/18px "Liberation Sans",Arial,sans-serif;color:#000}
td,th{padding:0;overflow:hidden;white-space:nowrap;border:0 solid #e2e3e3;border-width:0 1px 1px 0;height:19px}
td{padding:1px 0 0 3px;line-height:17px}
th{background:#f8f9fa;border-color:#c0c0c0;color:#5f6368;font:500 10px/18px Roboto,sans-serif;text-align:center}
.h th,.h td{height:22px;border-color:#c0c0c0}
.h .c{background:#f8f9fa;border-right:4px solid #bcbcbc}
.first td,.first th{height:18px;border-bottom:0}
.fz td,.fz th{height:5px;padding:0;border:0;background:#dadfe8;line-height:1px}
.fz th{background:#bcbcbc}
.sel,th.sel{background:#e8eaed}
.wide{overflow:visible;padding-left:2px}
.wide+.wide{padding-left:3px}
.spill{overflow:visible;border-right-color:transparent}
.num{text-align:right;padding-right:2px}
.cur{outline:2px solid #1a73e8;outline-offset:-1px;position:relative;overflow:visible}
.cur::after{content:"";position:absolute;right:-4px;bottom:-4px;width:6px;height:6px;background:#1a73e8;border:1px solid #fff}
.v{width:15px;background:#f0f0f0;display:flex;flex-direction:column;align-items:center}
.v .top{height:45px;width:100%;background:#f8f9fa;border-bottom:5px solid #dadfe8}
.v .u{height:25px;display:grid;place-items:end center}
.v .th{width:13px;height:13px;background:#c8c8c8;margin-top:5px}
.v .d{margin-top:auto;padding-bottom:15px}
.v ui-icon{display:flex}`,
 ()=>`<div class="g"><table><colgroup><col style="width:41px"><col style="width:207px">${'<col style="width:122px">'.repeat(9)}<col style="width:115px"><col style="width:199px"><col style="width:130px"><col></colgroup>${gridRows()}</table></div><div class="v"><div class="top"></div><div class="u">${ic('up',12)}</div><div class="th"></div><div class="d">${ic('down',12)}</div></div>`);

def('sheet-tabs',`:host{display:block}
.sc{display:flex;height:15px;background:#f0f0f0;align-items:center}
.sc .a{width:41px;height:15px;background:#f8f9fa;border-right:1px solid #dcdcdc}
.sc .l{width:31px;display:flex;justify-content:flex-end;padding-right:7px}
.sc .t{width:45%;height:14px;background:#cbcbcb}
.sc .r{margin-left:auto;padding-right:15px}
.sc .k{width:15px;height:15px;background:#f8f8f8;border:1px solid #d8d8d8;border-width:1px 0 0 1px}
.bar{display:flex;height:35px;border-top:1px solid #e0e3e8;background:#f1f3f4;align-items:stretch;padding-left:41px}
.bar button{display:flex;align-items:center;justify-content:center}
.add{width:18px;padding-bottom:2px}.all{width:40px;padding-bottom:2px}
.tab{margin-left:5px;width:87px;gap:9px;background:#fff;border:1px solid #e0e3e8;border-width:0 2px 0 1px;color:#188038;font-weight:500;font-size:13px;padding-bottom:2px}
.ex{margin-left:auto;width:94px;border-left:1px solid #c0c0c0;background:#fbfcfc;color:#188038;font-size:11px;gap:13px}`,
 `<div class="sc"><div class="a"></div><div class="l">${ic('left',11)}</div><div class="t"></div><div class="r">${ic('right',11)}</div><div class="k"></div></div><div class="bar"><button class="add" aria-label="Add sheet">${ic('addsheet',9)}</button><button class="all" aria-label="All sheets">${ic('list',11)}</button><button class="tab">Sheet1${ic('trigreen',7)}</button><button class="ex">${ic('explore',16,19)}Explore</button></div>`);

def('side-panel',`:host{display:flex;flex-direction:column;align-items:center;box-sizing:border-box;width:50px;border-left:1px solid #dadce0;padding:18px 0 20px 1px;gap:34px}
.e{margin-top:auto}ui-icon{display:flex}`,
 ic('cal',15,16)+ic('keep',15,16)+ic('tasks',17,18)+`<button class="e" aria-label="Hide">${ic('right',9)}</button>`);
</script>
</body>
</html>
